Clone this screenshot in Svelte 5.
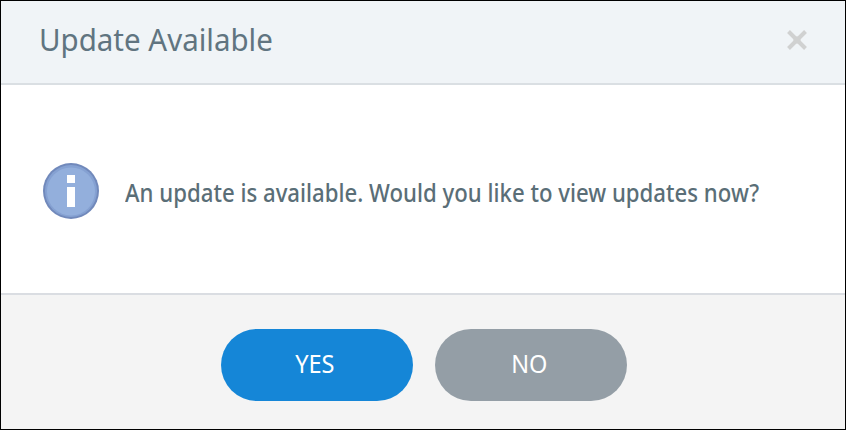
<script lang="ts">
    let {
        title = "Update Available",
        message = "An update is available. Would you like to view updates now?",
        onanswer = (accepted: boolean) => {}
    } = $props();

    let open = $state(true);

    function answer(accepted: boolean) {
        open = false;
        onanswer(accepted);
    }
</script>

<style>
    :global(body) {
        background: #fff;
    }

    .dialog {
        box-sizing: border-box;
        width: 846px;
        height: 430px;
        display: flex;
        flex-direction: column;
        border: 1px solid #000;
        background: #fff;
        font-family: "Noto Sans", "Open Sans", sans-serif;
        color: #5a6e77;
    }

    .header {
        box-sizing: border-box;
        height: 84px;
        display: flex;
        align-items: center;
        justify-content: space-between;
        padding: 0 38px 4px;
        border-bottom: 2px solid #dadfe3;
        background: #f0f4f7;
    }

    .title {
        margin: 0;
        font-size: 30px;
        font-weight: 400;
        line-height: 40px;
        white-space: nowrap;
        color: #607480;
    }

    /* slightly condensed lettering */
    .title span,
    .message span,
    .button span {
        display: inline-block;
        transform-origin: left center;
    }

    .title span {
        transform: scaleX(0.983);
    }

    .message span {
        transform: scaleX(0.888);
    }

    .button span {
        transform: scaleX(0.94);
        transform-origin: center;
    }

    .close {
        width: 20px;
        height: 20px;
        padding: 0;
        border: 0;
        background: none;
        cursor: pointer;
    }

    .close svg,
    .info {
        display: block;
    }

    .body {
        flex: 1;
        display: flex;
        align-items: center;
        gap: 25px;
        padding: 4px 41px 0;
    }

    .info {
        flex: none;
    }

    .message {
        margin: 0;
        padding-top: 1px;
        font-size: 25px;
        font-weight: 500;
        line-height: 34px;
        white-space: nowrap;
    }

    .footer {
        box-sizing: border-box;
        height: 136px;
        display: flex;
        justify-content: center;
        gap: 22px;
        padding-top: 34px;
        padding-left: 2px;
        border-top: 2px solid #dadde2;
        background: #f4f4f4;
    }

    .button {
        width: 192px;
        height: 72px;
        padding: 0 4px 4px 0;
        border: 0;
        border-radius: 36px;
        background: #949ea6;
        font-family: inherit;
        font-size: 25px;
        color: #fff;
        cursor: pointer;
    }

    .button.primary {
        background: #1586d7;
    }
</style>

{#if open}
    <div class="dialog" role="dialog" aria-label={title}>
        <div class="header">
            <h1 class="title"><span>{title}</span></h1>
            <button class="close" aria-label="Close" onclick={() => answer(false)}>
                <svg width="20" height="20" viewBox="0 0 20 20">
                    <path d="M1.5 1.5L18.5 18.5M18.5 1.5L1.5 18.5" stroke="#d0d1d1" stroke-width="4" />
                    <path d="M6.5 6.5h7v7h-7z" fill="#d0d1d1" />
                </svg>
            </button>
        </div>

        <div class="body">
            <svg class="info" width="58" height="58" viewBox="0 0 58 58">
                <circle cx="29" cy="29" r="28" fill="#7189bb" />
                <circle cx="29" cy="29" r="26" fill="#85a1d2" />
                <circle cx="29" cy="29.5" r="24" fill="#93afdc" />
                <path d="M25 13h8v8h-8zM25 25h8v20h-8z" fill="#fff" />
            </svg>
            <p class="message"><span>{message}</span></p>
        </div>

        <div class="footer">
            <button class="button primary" onclick={() => answer(true)}><span>YES</span></button>
            <button class="button" onclick={() => answer(false)}><span>NO</span></button>
        </div>
    </div>
{/if}
